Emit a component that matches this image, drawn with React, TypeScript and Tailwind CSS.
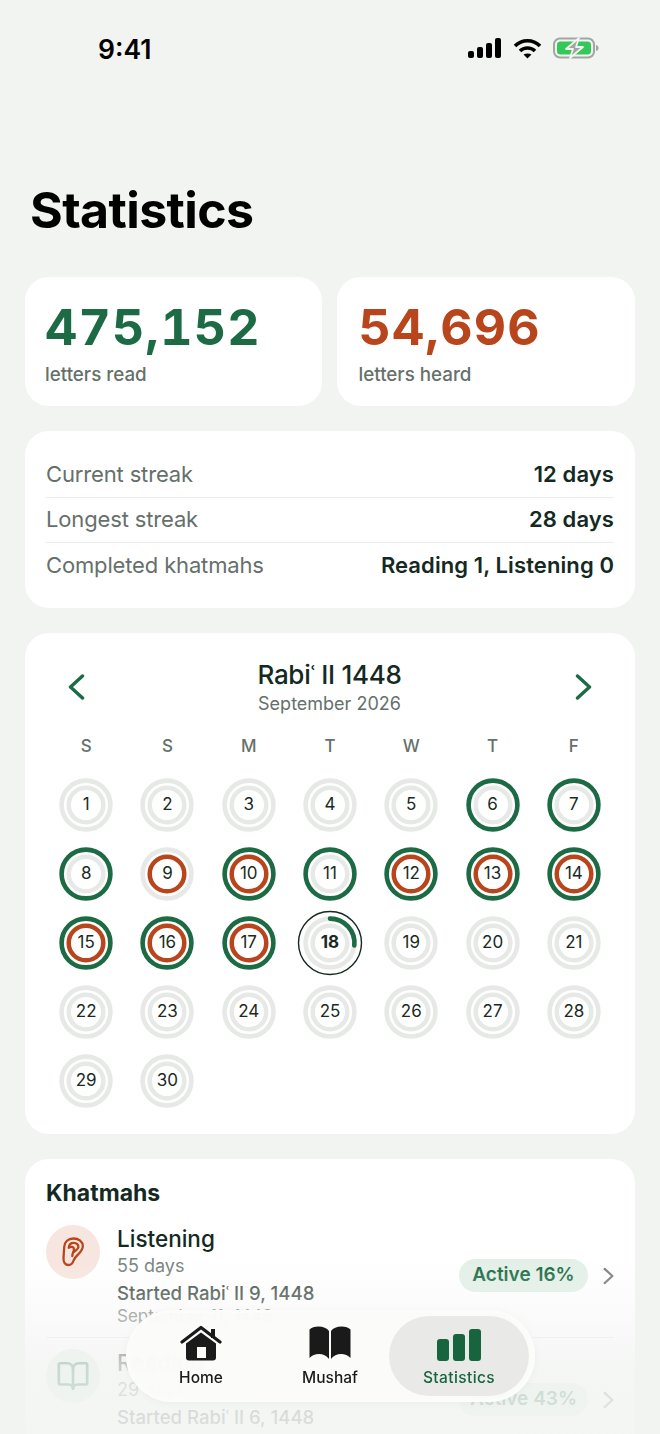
import React from "react";
import { BookOpen } from "lucide-react";

const GREY = "#e6e9e6";
const GREEN = "#1c6b44";
const RED = "#b9451c";

function Day({ n, outer, inner, today }: { n: number; outer?: boolean; inner?: boolean; today?: boolean }) {
  return (
    <div className="relative flex h-[69px] items-center justify-center">
      <svg width="66" height="66" viewBox="0 0 66 66" className="absolute left-1/2 top-1/2 -translate-x-1/2 -translate-y-1/2">
        {today && <circle cx="33" cy="33" r="31.5" fill="none" stroke="#14291f" strokeWidth="1.4" />}
        <circle cx="33" cy="33" r={24.4} fill="none" stroke={outer ? GREEN : GREY} strokeWidth="4.6" />
        <circle cx="33" cy="33" r={17.3} fill="none" stroke={inner ? RED : GREY} strokeWidth="4.5" />
        {today && <path d="M33 8.6 A24.4 24.4 0 0 1 57.3 35.5" fill="none" stroke={GREEN} strokeWidth="4.6" strokeLinecap="round" />}
      </svg>
      <span className={`relative text-[17px] text-[#1b2a23] ${today ? "font-bold" : "font-normal"}`}>{n}</span>
    </div>
  );
}

const days = Array.from({ length: 30 }, (_, i) => i + 1);
const outerSet = new Set([6, 7, 8, 10, 11, 12, 13, 14, 15, 16, 17]);
const innerSet = new Set([9, 10, 12, 13, 14, 15, 16, 17]);

function Row({ label, value, last }: { label: string; value: string; last?: boolean }) {
  return (
    <div className={`flex h-[45.5px] items-center justify-between ${last ? "" : "border-b border-[#eceeec]"}`}>
      <span className="text-[22px] tracking-[-0.15px] text-[#66706b]">{label}</span>
      <span className="text-[22px] font-semibold tracking-[0.1px] text-[#14291f]">{value}</span>
    </div>
  );
}

function Chevron({ dir, cls }: { dir: "l" | "r"; cls: string }) {
  return (
    <svg width="17" height="26" viewBox="0 0 17 26" fill="none" stroke="currentColor" strokeWidth="3.4" strokeLinecap="round" strokeLinejoin="round" className={cls}>
      <path d={dir === "l" ? "M14.5 2 L2.5 13 L14.5 24" : "M2.5 2 L14.5 13 L2.5 24"} />
    </svg>
  );
}

function EarIcon() {
  return (
    <svg width="24" height="30" viewBox="0 0 24 30" fill="none" stroke="#b9451c" strokeWidth="2.3" strokeLinecap="round" strokeLinejoin="round">
      <path d="M12.5 1.5 C7 1.5 3.6 5 3.2 10 L2.5 21 C2.2 25.5 4.5 28 7.5 28 C10.5 28 11.8 26 12.6 23.5 C13.4 21 15 19.5 17.5 17 C20.5 14 21.8 12 21.8 9 C21.8 4.8 17.8 1.5 12.5 1.5 Z" />
      <path d="M7.8 10.5 C8 7.5 10 5.8 12.8 5.8 C15.6 5.8 17.6 7.8 17.4 10.2 C17.2 12.6 14.6 13.4 13 14.8" />
      <path d="M8 10.5 C10 9.2 12.8 9.8 13 12 C13 14 11.5 16 11.3 19" />
    </svg>
  );
}

function Khatmah({ icon, bg, title, days, started, sub, pct }: { icon: React.ReactNode; bg: string; title: string; days: string; started: string; sub?: string; pct: string }) {
  return (
    <div className="flex h-[125px] items-start">
      <div className={`mt-[11px] flex h-[54px] w-[54px] shrink-0 items-center justify-center rounded-full ${bg}`}>{icon}</div>
      <div className="ml-[17px] flex min-w-0 flex-1 flex-col pt-[10px]">
        <span className="text-[22.5px] font-medium leading-[30px] text-[#14291f]">{title}</span>
        <span className="text-[18px] leading-[24px] text-[#7a827e]">{days}</span>
        <span className="mt-[2px] text-[18.6px] font-medium leading-[27px] text-[#3c4a44]">{started}</span>
        {sub && <span className="text-[17px] leading-[19px] text-[#7a827e]">{sub}</span>}
      </div>
      <div className="mt-[45px] flex items-center">
        <span className="flex h-[33px] w-[129px] items-center justify-center rounded-full bg-[#e3f0e8] text-[19px] font-semibold text-[#1c6b44]">{pct}</span>
        <Chevron dir="r" cls="ml-[15px] h-[18px] w-[11px] text-[#7a7f7c]" />
      </div>
    </div>
  );
}

export default function App() {
  return (
    <div className="relative h-[1434px] w-[660px] overflow-hidden bg-[#f2f4f2] font-['Inter',sans-serif]">
      <div className="flex h-[97px] items-start justify-between pl-[98px] pr-[61px] pt-[32px]">
        <span className="text-[26.5px] font-semibold leading-[34px] text-black">9:41</span>
        <div className="mt-[5px] flex items-center gap-[11px]">
          <svg width="34" height="20" viewBox="0 0 34 20" fill="#000">
            <rect x="0" y="13" width="6" height="7" rx="2" />
            <rect x="9" y="9" width="6" height="11" rx="2" />
            <rect x="18" y="5" width="6" height="15" rx="2" />
            <rect x="27" y="0" width="6" height="20" rx="2" />
          </svg>
          <svg width="29" height="21" viewBox="0 0 29 21" fill="none" stroke="#000" strokeWidth="3.6">
            <path d="M2 8 C9 1 20 1 27 8" />
            <path d="M7 13 C11 9 18 9 22 13" />
            <path d="M14.5 20.5 L10.5 16.5 C13 15 16 15 18.5 16.5 Z" fill="#000" stroke="none" />
          </svg>
          <svg width="46" height="22" viewBox="0 0 46 22" fill="none">
            <rect x="1" y="1.5" width="40" height="19" rx="6" stroke="#a3a5a3" strokeWidth="2" />
            <rect x="4" y="4.5" width="34" height="13" rx="3.5" fill="#34c759" />
            <path d="M43 8 C45 8.5 45.5 9.5 45.5 11 C45.5 12.5 45 13.5 43 14 Z" fill="#a3a5a3" />
            <path d="M26 1 L13 12 H20 L17 21 L30 10 H23 Z" fill="#a3a5a3" stroke="#f2f4f2" strokeWidth="1.8" strokeLinejoin="round" />
          </svg>
        </div>
      </div>

      <h1 className="mt-[83px] pl-[30px] text-[50px] font-bold leading-[60px] tracking-[-0.6px] text-black">Statistics</h1>

      <div className="mt-[37px] flex flex-col gap-[25px] px-[25px]">
        <div className="flex gap-[15px]">
          <div className="flex h-[129px] flex-1 flex-col rounded-[24px] bg-white pl-[20px] pt-[21px]">
            <span className="text-[50px] font-bold tabular-nums leading-[58px] tracking-[1.2px] text-[#1c6b44]">475,152</span>
            <span className="mt-[7px] text-[18.8px] font-medium leading-[24px] text-[#66706b]">letters read</span>
          </div>
          <div className="flex h-[129px] flex-1 flex-col rounded-[24px] bg-white pl-[22px] pt-[21px]">
            <span className="text-[50px] font-bold tabular-nums leading-[58px] tracking-[1.2px] text-[#b9451c]">54,696</span>
            <span className="mt-[7px] text-[18.8px] font-medium leading-[24px] text-[#66706b]">letters heard</span>
          </div>
        </div>

        <div className="flex h-[177px] flex-col rounded-[24px] bg-white px-[21px] pt-[21px]">
          <Row label="Current streak" value="12 days" />
          <Row label="Longest streak" value="28 days" />
          <Row label="Completed khatmahs" value="Reading 1, Listening 0" last />
        </div>

        <div className="h-[501px] rounded-[24px] bg-white px-[20.5px] pt-[25px]">
          <div className="flex items-center justify-between pl-[22px] pr-[23px]">
            <Chevron dir="l" cls="text-[#1c6b44]" />
            <div className="flex flex-col items-center">
              <span className="text-[26px] font-medium leading-[34px] tracking-[-0.3px] text-[#14291f]">Rabiʿ II 1448</span>
              <span className="text-[18px] leading-[24px] text-[#66706b]">September 2026</span>
            </div>
            <Chevron dir="r" cls="text-[#1c6b44]" />
          </div>
          <div className="mt-[18px] grid grid-cols-7">
            {["S", "S", "M", "T", "W", "T", "F"].map((d, i) => (
              <span key={i} className="text-center text-[17px] font-medium leading-[24px] text-[#66706b]">{d}</span>
            ))}
          </div>
          <div className="mt-[12px] grid grid-cols-7">
            {days.map((n) => (
              <Day key={n} n={n} outer={outerSet.has(n)} inner={innerSet.has(n)} today={n === 18} />
            ))}
          </div>
        </div>

        <div className="h-[400px] rounded-[24px] bg-white px-[21px] pt-[19px]">
          <h2 className="text-[23px] font-bold leading-[30px] text-[#14291f]">Khatmahs</h2>
          <div className="mt-[6px] h-[124px] border-b border-[#eceeec]">
            <Khatmah
              icon={<EarIcon />}
              bg="bg-[#f7e6df]"
              title="Listening"
              days="55 days"
              started="Started Rabiʿ II 9, 1448"
              sub="September 11, 1448"
              pct="Active 16%"
            />
          </div>
          <Khatmah
            icon={<BookOpen className="h-[34px] w-[34px] text-[#1c6b44]" strokeWidth={1.9} />}
            bg="bg-[#e3f0e8]"
            title="Reading"
            days="29 days"
            started="Started Rabiʿ II 6, 1448"
            pct="Active 43%"
          />
        </div>
      </div>

      <div className="absolute inset-x-0 bottom-0 h-[172px] bg-gradient-to-b from-[#f2f4f200] via-[#f2f4f2cc] via-60% to-[#f2f4f2e0]" />

      <div className="absolute bottom-[32px] left-[126px] flex h-[92px] w-[409px] items-center rounded-[46px] border-[3px] border-[#fcfdfb] bg-[#fbfcfa]/95 pl-[7px] pr-[3px] shadow-[0_1px_8px_rgba(0,0,0,0.04)] backdrop-blur-[1px]">
        <div className="flex h-[80px] w-[130px] flex-col items-center justify-start pt-[9px]">
          <svg width="42" height="37" viewBox="0 0 42 37" fill="#1a1a1a">
            <path d="M2 17 L21 2.5 L40 17" fill="none" stroke="#1a1a1a" strokeWidth="3.2" strokeLinecap="round" strokeLinejoin="round" />
            <rect x="31" y="4" width="4" height="9" />
            <path fillRule="evenodd" d="M6 18.5 L21 7.5 L36 18.5 V32.5 Q36 35.5 33 35.5 H9 Q6 35.5 6 32.5 Z M17 22 V33 H26 V22 Z" />
          </svg>
          <span className="mt-[7px] text-[15.5px] font-medium leading-[18px] text-[#1a1a1a]">Home</span>
        </div>
        <div className="ml-[5px] flex h-[80px] w-[118px] flex-col items-center justify-start pt-[10px]">
          <svg width="42" height="34" viewBox="0 0 42 34" fill="#1a1a1a">
            <path d="M20 5 C18 2 14 0.5 9.5 0.5 C5.5 0.5 2.5 1.5 0.5 3.5 V32 C3 29.5 6 28 10 28 C14 28 17.5 29.5 20 33 Z" />
            <path d="M22 5 C24 2 28 0.5 32.5 0.5 C36.5 0.5 39.5 1.5 41.5 3.5 V32 C39 29.5 36 28 32 28 C28 28 24.5 29.5 22 33 Z" />
          </svg>
          <span className="mt-[9px] text-[15.5px] font-medium leading-[18px] text-[#1a1a1a]">Mushaf</span>
        </div>
        <div className="flex h-[80px] w-[140px] flex-col items-center justify-start rounded-[40px] bg-[#e9eae7] pt-[13px]">
          <svg width="44" height="32" viewBox="0 0 44 32" fill="#17643f">
            <rect x="0" y="10" width="12" height="22" rx="3" />
            <rect x="16" y="5" width="12" height="27" rx="3" />
            <rect x="32" y="0" width="12" height="32" rx="3" />
          </svg>
          <span className="mt-[8px] text-[15.5px] font-medium leading-[18px] tracking-[0.4px] text-[#17643f]">Statistics</span>
        </div>
      </div>
    </div>
  );
}
